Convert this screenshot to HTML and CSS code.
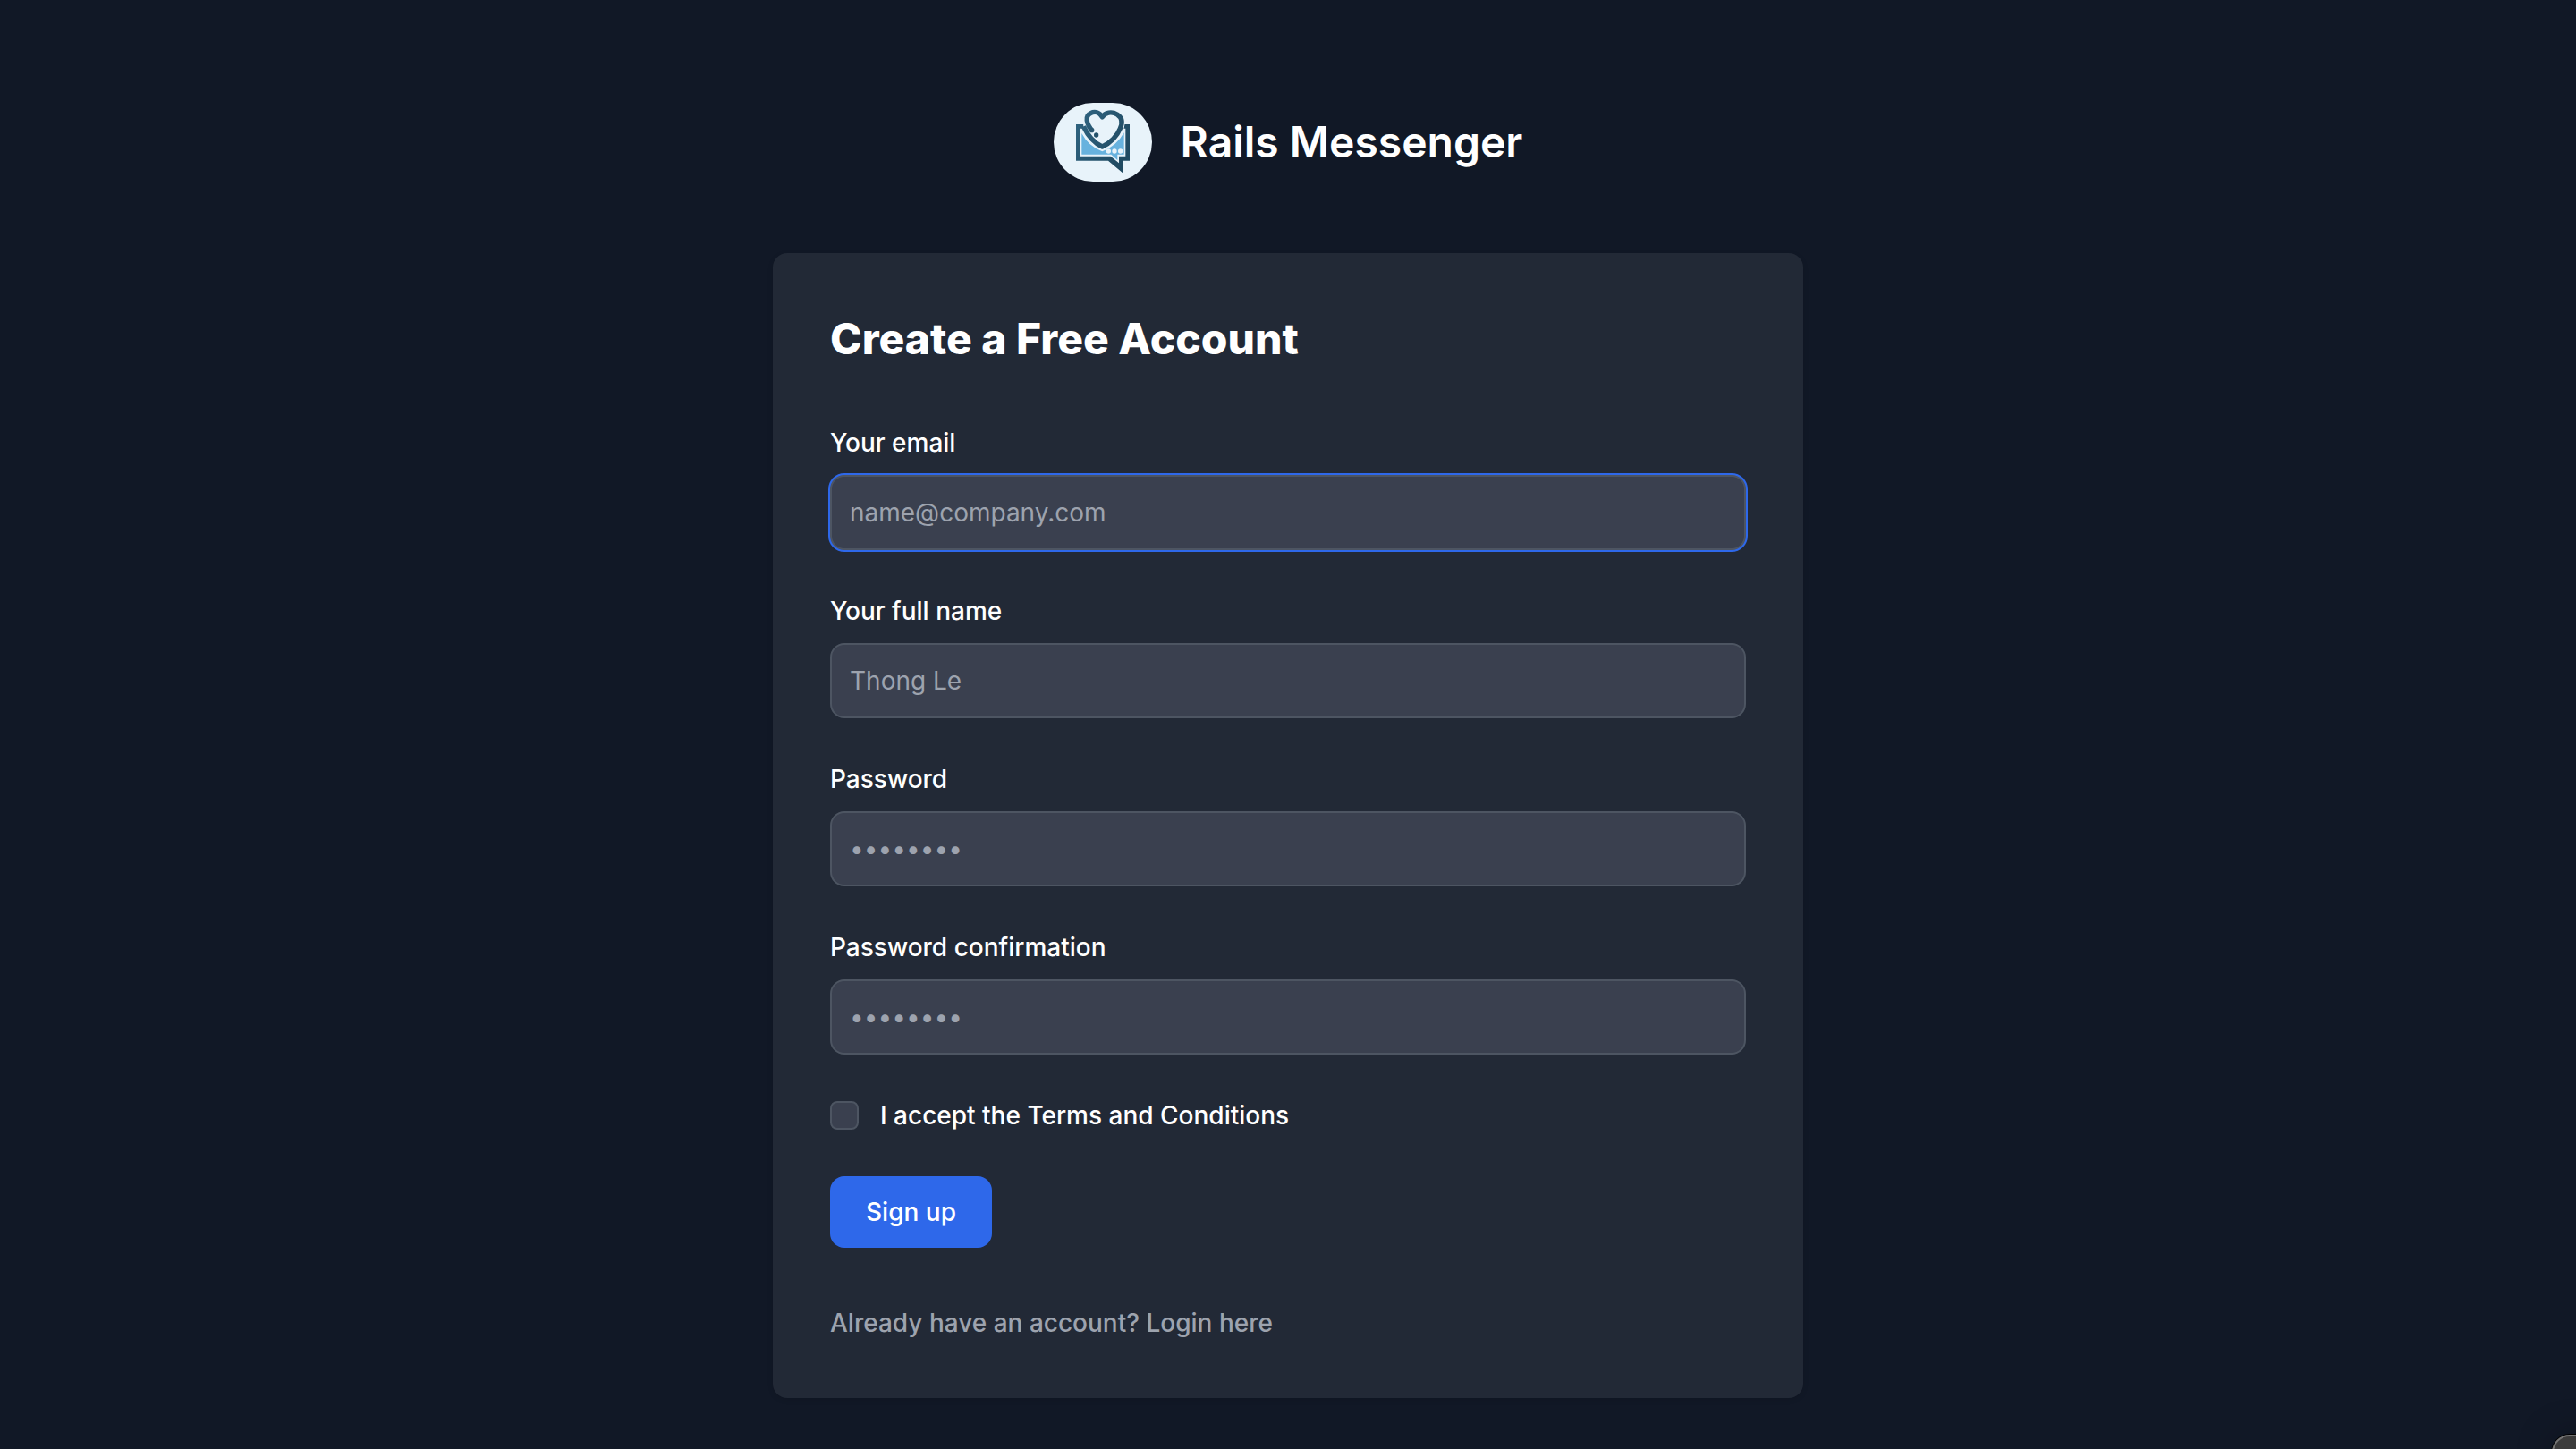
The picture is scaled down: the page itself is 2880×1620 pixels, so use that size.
FILE: index.html
```html
<!DOCTYPE html>
<html lang="en">
<head>
<meta charset="utf-8">
<meta name="viewport" content="width=device-width, initial-scale=1">
<title>Rails Messenger</title>
<link rel="stylesheet" href="styles.css">
</head>
<body>
<main class="page">
  <a class="brand" href="#">
    <svg class="brand-logo" viewBox="54 45 330 264" aria-hidden="true">
      <defs>
        <linearGradient id="ink" gradientUnits="userSpaceOnUse" x1="129" x2="309" y1="100" y2="200">
          <stop offset="0" stop-color="#2f6380"/>
          <stop offset="1" stop-color="#204a61"/>
        </linearGradient>
      </defs>
      <rect x="54" y="45" width="330" height="264" fill="#e8f3fa"/>
      <path d="M129 117H309V239H288V282L237 239H129Z" fill="url(#ink)"/>
      <path d="M143 131H295V224H273V247L245 224H143Z" fill="#e8f3fa"/>
      <path d="M148 147Q170 190 217 208Q265 190 290 145V218H268V237L247 218H148Z" fill="#67b2de"/>
      <path d="M217 198C190 184 153 148 159 106C164 68 196 62 217 84C238 62 276 68 287 98C295 140 254 182 217 198Z" fill="#e8f3fa" stroke="#e8f3fa" stroke-width="10"/>
      <path d="M184 139C163 116 158 88 178 80C194 72 209 79 217 93C226 77 249 73 267 84C285 96 285 114 277 131C268 155 244 180 217 192C193 181 169 156 154 124" fill="none" stroke="url(#ink)" stroke-width="16" stroke-linejoin="round"/>
      <circle cx="182" cy="137" r="8" fill="#2a5770"/>
      <circle cx="197" cy="153" r="8" fill="#24516a"/>
      <g fill="#e8f3fa"><circle cx="238" cy="207" r="8"/><circle cx="258" cy="207" r="8"/><circle cx="278" cy="207" r="8"/></g>
    </svg>
    <span>Rails Messenger</span>
  </a>
  <section class="card">
    <h1 class="card-title">Create a Free Account</h1>
    <form class="form">
      <div class="field">
        <label for="email">Your email</label>
        <input class="input input-active" id="email" type="email" placeholder="name@company.com">
      </div>
      <div class="field">
        <label for="name">Your full name</label>
        <input class="input" id="name" type="text" placeholder="Thong Le">
      </div>
      <div class="field">
        <label for="password">Password</label>
        <input class="input" id="password" type="password" placeholder="••••••••">
      </div>
      <div class="field">
        <label for="confirmation">Password confirmation</label>
        <input class="input" id="confirmation" type="password" placeholder="••••••••">
      </div>
      <div class="terms">
        <input class="checkbox" id="terms" type="checkbox">
        <label for="terms">I accept the Terms and Conditions</label>
      </div>
      <button class="submit" type="submit">Sign up</button>
    </form>
    <p class="login">Already have an account? <a href="#">Login here</a></p>
  </section>
</main>
<div class="corner-panel"></div>
</body>
</html>
```
FILE: styles.css
```css
* {
  box-sizing: border-box;
}

body {
  margin: 0;
  min-height: 100vh;
  overflow-x: hidden;
  background: #111826;
  color: #fff;
  font-family: Inter, "Liberation Sans", sans-serif;
  font-size: 28px;
  line-height: 40px;
}

a {
  color: inherit;
  text-decoration: none;
}

.page {
  display: flex;
  flex-direction: column;
  align-items: center;
  gap: 80px;
  padding: 115px 32px 57px;
}

.brand {
  display: flex;
  align-items: center;
  gap: 32px;
  font-size: 48px;
  font-weight: 600;
  line-height: 64px;
}

.brand-logo {
  width: 110px;
  height: 88px;
  border-radius: 44px;
}

.card {
  width: 100%;
  max-width: 1152px;
  padding: 64px;
  border-radius: 16px;
  background: #222936;
  box-shadow: 0 2px 6px rgba(0, 0, 0, 0.1);
}

.card-title {
  margin: 0 0 64px;
  font-size: 48px;
  font-weight: 800;
  line-height: 64px;
}

.form {
  display: flex;
  flex-direction: column;
  align-items: flex-start;
  gap: 48px;
  font-weight: 500;
}

.field {
  display: flex;
  flex-direction: column;
  gap: 16px;
  width: 100%;
}

.input {
  width: 100%;
  height: 84px;
  padding: 20px;
  border: 2px solid #4d5562;
  border-radius: 16px;
  outline: none;
  background: #3a404f;
  color: #fff;
  font: inherit;
  font-weight: 400;
}

.input::placeholder {
  color: #9da3ae;
  opacity: 1;
}

.input-active,
.input:focus {
  box-shadow: 0 0 0 2px #2e68ea;
}

.terms {
  display: flex;
  align-items: center;
  gap: 24px;
}

.checkbox {
  appearance: none;
  width: 32px;
  height: 32px;
  margin: 0;
  border: 2px solid #4d5562;
  border-radius: 8px;
  background: #3a404f;
}

.checkbox:checked {
  background: #2e68ea;
}

.submit {
  padding: 20px 40px;
  border: 0;
  border-radius: 16px;
  background: #2e68ea;
  color: #fff;
  font: inherit;
}

.login {
  margin: 64px 0 0;
  color: #9da3ae;
  font-weight: 500;
}

.corner-panel {
  position: fixed;
  right: -40px;
  bottom: -40px;
  width: 67px;
  height: 56px;
  border: 2px solid #747474;
  border-radius: 20px;
  background: #3b3b3b;
  box-shadow: 0 0 0 1px #000, 0 0 40px rgba(0, 0, 0, 0.25);
}
```
